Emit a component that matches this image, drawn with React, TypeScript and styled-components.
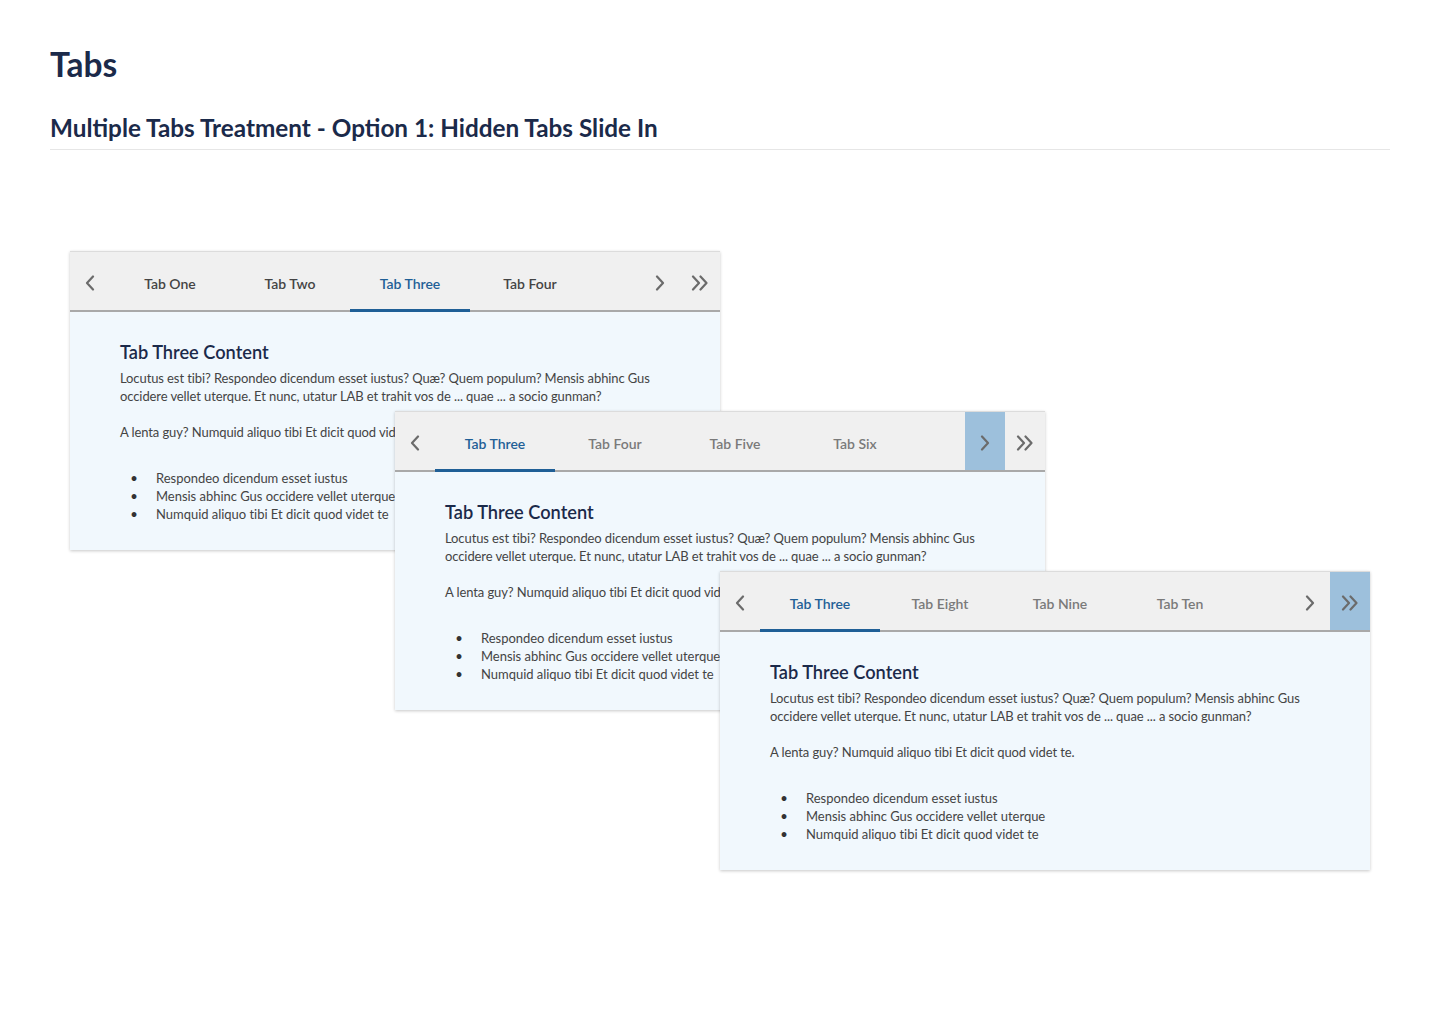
import styled, { createGlobalStyle } from "styled-components";

const GlobalStyle = createGlobalStyle`
  body {
    margin: 0;
    background: #ffffff;
    font-family: "Lato", "Open Sans", sans-serif;
    color: #444444;
  }
`;

const Page = styled.main`
  padding: 44px 50px 0;
  width: 1440px;
  min-height: 1024px;
  box-sizing: border-box;
`;

const Title = styled.h1`
  margin: 0;
  font-size: 33.5px;
  line-height: 40px;
  font-weight: 700;
  color: #1b2a4a;
`;

const Subtitle = styled.h2`
  margin: 29px 0 0;
  padding-bottom: 6px;
  font-size: 24.3px;
  line-height: 30px;
  font-weight: 700;
  color: #1b2a4a;
  border-bottom: 1px solid #e6e6e6;
`;

const Stage = styled.div`
  margin: 101px 0 0 20px;
  display: grid;
  grid-template-columns: repeat(4, 325px);
  grid-template-rows: repeat(4, 160px);
`;

const Card = styled.section<{ $step: number }>`
  grid-column: ${(p) => p.$step + 1} / span 2;
  grid-row: ${(p) => p.$step + 1} / span 2;
  align-self: start;
  background: #f1f8fd;
  box-shadow: 0 1px 3px rgba(0, 0, 0, 0.22);
`;

const TabBar = styled.div`
  display: flex;
  height: 61px;
  padding-top: 4px;
  box-sizing: border-box;
  background: #f0f0f0;
  border-top: 1px solid #dcdcdc;
  border-bottom: 2px solid #a9a9a9;
`;

const NavButton = styled.button<{ $highlight?: boolean }>`
  all: unset;
  width: 40px;
  flex-shrink: 0;
  margin-top: -4px;
  padding-top: 3px;
  display: flex;
  align-items: center;
  justify-content: center;
  background: ${(p) => (p.$highlight ? "#9dc0dc" : "transparent")};
  color: #6b6b6b;
  cursor: pointer;
`;

const Tab = styled.button<{ $active?: boolean; $muted?: boolean }>`
  all: unset;
  position: relative;
  width: 120px;
  flex-shrink: 0;
  display: flex;
  align-items: center;
  justify-content: center;
  font-family: "Lato", sans-serif;
  font-size: 14px;
  font-weight: 600;
  color: ${(p) => (p.$active ? "#1f5f96" : p.$muted ? "#7a7a7a" : "#444444")};
  cursor: pointer;

  &::after {
    content: "";
    position: absolute;
    left: 0;
    right: 0;
    bottom: -2px;
    height: 3px;
    background: ${(p) => (p.$active ? "#1f5f96" : "transparent")};
  }
`;

const Spacer = styled.div`
  flex: 1;
`;

const Content = styled.div`
  padding: 28px 50px 27px;
  overflow: hidden;
`;

const ContentTitle = styled.h3`
  margin: 0 0 5px;
  font-size: 18.2px;
  line-height: 24px;
  font-weight: 600;
  color: #1b2a4a;
`;

const Paragraph = styled.p`
  margin: 0 0 18px;
  font-size: 13px;
  line-height: 18px;
  letter-spacing: -0.1px;
  color: #444444;
  max-width: 550px;
`;

const List = styled.ul`
  list-style: none;
  margin: 28px 0 0;
  padding: 0;
  font-size: 13px;
  line-height: 18px;
  letter-spacing: -0.03px;
  color: #444444;

  li {
    display: flex;
    white-space: nowrap;
  }

  li::before {
    content: "•";
    width: 28px;
    margin-right: 8px;
    text-align: center;
    color: #333333;
  }
`;

function Chevron({ dir }: { dir: "left" | "right" }) {
  return (
    <svg width="10" height="16" viewBox="0 0 10 16" fill="none">
      <path
        d={dir === "left" ? "M8 1.5 L2 8 L8 14.5" : "M2 1.5 L8 8 L2 14.5"}
        stroke="currentColor"
        strokeWidth="2.2"
        strokeLinecap="round"
        strokeLinejoin="round"
      />
    </svg>
  );
}

function DoubleChevron() {
  return (
    <svg width="18" height="16" viewBox="0 0 18 16" fill="none">
      <path
        d="M2 1.5 L8 8 L2 14.5 M9.5 1.5 L15.5 8 L9.5 14.5"
        stroke="currentColor"
        strokeWidth="2.2"
        strokeLinecap="round"
        strokeLinejoin="round"
      />
    </svg>
  );
}

type Variant = {
  tabs: string[];
  muted: boolean;
  highlight?: "next" | "last";
};

const variants: Variant[] = [
  { tabs: ["Tab One", "Tab Two", "Tab Three", "Tab Four"], muted: false },
  { tabs: ["Tab Three", "Tab Four", "Tab Five", "Tab Six"], muted: true, highlight: "next" },
  { tabs: ["Tab Three", "Tab Eight", "Tab Nine", "Tab Ten"], muted: true, highlight: "last" },
];

function TabsCard({ variant, step }: { variant: Variant; step: number }) {
  return (
    <Card $step={step}>
      <TabBar>
        <NavButton aria-label="Previous">
          <Chevron dir="left" />
        </NavButton>
        {variant.tabs.map((t) => (
          <Tab key={t} $active={t === "Tab Three"} $muted={variant.muted}>
            {t}
          </Tab>
        ))}
        <Spacer />
        <NavButton aria-label="Next" $highlight={variant.highlight === "next"}>
          <Chevron dir="right" />
        </NavButton>
        <NavButton aria-label="Last" $highlight={variant.highlight === "last"}>
          <DoubleChevron />
        </NavButton>
      </TabBar>
      <Content>
        <ContentTitle>Tab Three Content</ContentTitle>
        <Paragraph>
          Locutus est tibi? Respondeo dicendum esset iustus? Quæ? Quem populum? Mensis abhinc Gus
          occidere vellet uterque. Et nunc, utatur LAB et trahit vos de ... quae ... a socio gunman?
        </Paragraph>
        <Paragraph>A lenta guy? Numquid aliquo tibi Et dicit quod videt te.</Paragraph>
        <List>
          <li>Respondeo dicendum esset iustus</li>
          <li>Mensis abhinc Gus occidere vellet uterque</li>
          <li>Numquid aliquo tibi Et dicit quod videt te</li>
        </List>
      </Content>
    </Card>
  );
}

export default function App() {
  return (
    <>
      <GlobalStyle />
      <Page>
        <Title>Tabs</Title>
        <Subtitle>Multiple Tabs Treatment - Option 1: Hidden Tabs Slide In</Subtitle>
        <Stage>
          {variants.map((v, i) => (
            <TabsCard key={i} variant={v} step={i} />
          ))}
        </Stage>
      </Page>
    </>
  );
}
